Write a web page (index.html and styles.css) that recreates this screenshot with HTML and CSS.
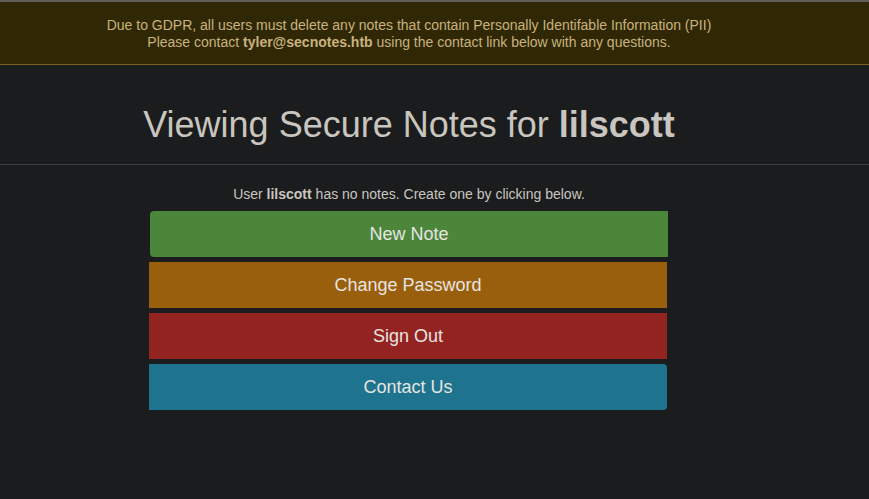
FILE: index.html
```html
<!DOCTYPE html>
<html>
<head>
<meta charset="utf-8">
<link rel="stylesheet" href="styles.css">
</head>
<body>
<div class="topline"></div>
<div class="banner">
  <div class="inner">
    Due to GDPR, all users must delete any notes that contain Personally Identifable Information (PII)<br>
    Please contact <strong>tyler@secnotes.htb</strong> using the contact link below with any questions.
  </div>
</div>
<div class="header">
  <h1 class="title">Viewing Secure Notes for <strong>lilscott</strong></h1>
</div>
<div class="content">
  <p class="info">User <strong>lilscott</strong> has no notes. Create one by clicking below.</p>
  <div class="actions">
    <a class="btn btn-new">New Note</a>
    <a class="btn btn-pass">Change Password</a>
    <a class="btn btn-out">Sign Out</a>
    <a class="btn btn-contact">Contact Us</a>
  </div>
</div>
</body>
</html>
```
FILE: styles.css
```css
html, body {
  margin: 0;
  padding: 0;
  background: #1b1c1e;
  font-family: "Liberation Sans", Arial, sans-serif;
  color: #c9c5bf;
  height: 100%;
}
.topline {
  height: 2px;
  background: #5f5d5a;
}
.banner {
  background: #302805;
  border-bottom: 1px solid #806018;
  height: 63px;
  box-sizing: border-box;
  padding-top: 15px;
  color: #c9b27e;
  font-size: 14px;
  line-height: 17px;
}
.banner .inner {
  width: 818px;
  text-align: center;
}
.header {
  border-bottom: 1px solid #3c3d3f;
  height: 100px;
  box-sizing: border-box;
}
.title {
  width: 818px;
  margin: 0;
  padding-top: 38px;
  text-align: center;
  font-size: 36px;
  font-weight: normal;
  line-height: 44px;
  color: #c9c5bf;
}
.title strong { font-weight: bold; }
.content {
  width: 818px;
}
.info {
  margin: 19px 0 0;
  text-align: center;
  font-size: 14px;
  line-height: 20px;
}
.actions {
  margin: 7px 0 0 149px;
  width: 518px;
  display: flex;
  flex-direction: column;
  gap: 5px;
}
.btn {
  display: flex;
  align-items: center;
  justify-content: center;
  height: 46px;
  font-size: 18px;
  color: #e6e4e0;
}
.btn-new {
  background: #4c863b;
  margin-left: 1px;
  margin-right: -1px;
  border-radius: 4px 0 0 4px;
}
.btn-pass { background: #9a5f0c; }
.btn-out { background: #932321; }
.btn-contact {
  background: #1e748f;
  border-radius: 0 4px 4px 0;
}
```
